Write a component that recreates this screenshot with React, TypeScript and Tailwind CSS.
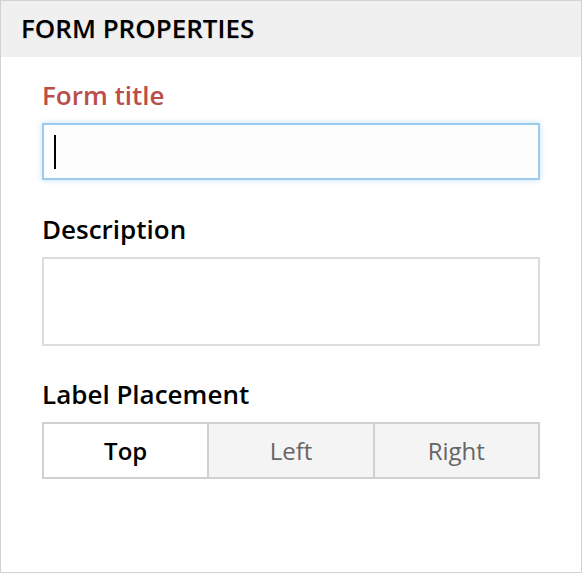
export default function App() {
  return (
    <div className="w-[583px] h-[575px] bg-white font-['Open_Sans',sans-serif]">
      <div className="w-[582px] h-[573px] border border-[#d2d2d2] bg-white flex flex-col">
        {/* Header */}
        <div className="h-[56px] shrink-0 bg-[#f0f0f0] pl-[20px] pt-[9px]">
          <h2 className="text-[26px] leading-[36px] font-semibold text-black [text-shadow:0_1px_1px_rgba(0,0,0,0.15)]">
            FORM PROPERTIES
          </h2>
        </div>

        {/* Body */}
        <div className="px-[41px] pt-[20px] flex flex-col">
          <label className="text-[26px] leading-[36px] font-semibold text-[#b94f4a]">Form title</label>
          <div className="relative mt-[10px] h-[57px] shrink-0">
            <input
              className="block w-full h-[57px] border-2 border-[#9ccbee] bg-[#fdfdfd] outline-none shadow-[0_0_6px_rgba(82,168,236,0.35)] px-[10px] text-[24px]"
              type="text"
            />
            <span className="absolute left-[12px] top-[12px] w-[2px] h-[34px] bg-black pointer-events-none" />
          </div>

          <label className="mt-[31px] text-[26px] leading-[36px] font-semibold text-black">Description</label>
          <textarea className="block mt-[10px] w-full h-[89px] shrink-0 border-2 border-[#dcdcdc] outline-none resize-none" />

          <label className="mt-[30px] text-[26px] leading-[36px] font-semibold text-black">Label Placement</label>
          <div className="mt-[10px] flex h-[57px] shrink-0 border-2 border-[#d0d0d0]">
            <button className="flex-1 bg-white text-black font-semibold text-[24px]">Top</button>
            <button className="flex-1 bg-[#f4f4f4] text-[#666] text-[24px] border-l-2 border-[#d0d0d0]">Left</button>
            <button className="flex-1 bg-[#f4f4f4] text-[#666] text-[24px] border-l-2 border-[#d0d0d0]">Right</button>
          </div>
        </div>
      </div>
    </div>
  );
}
